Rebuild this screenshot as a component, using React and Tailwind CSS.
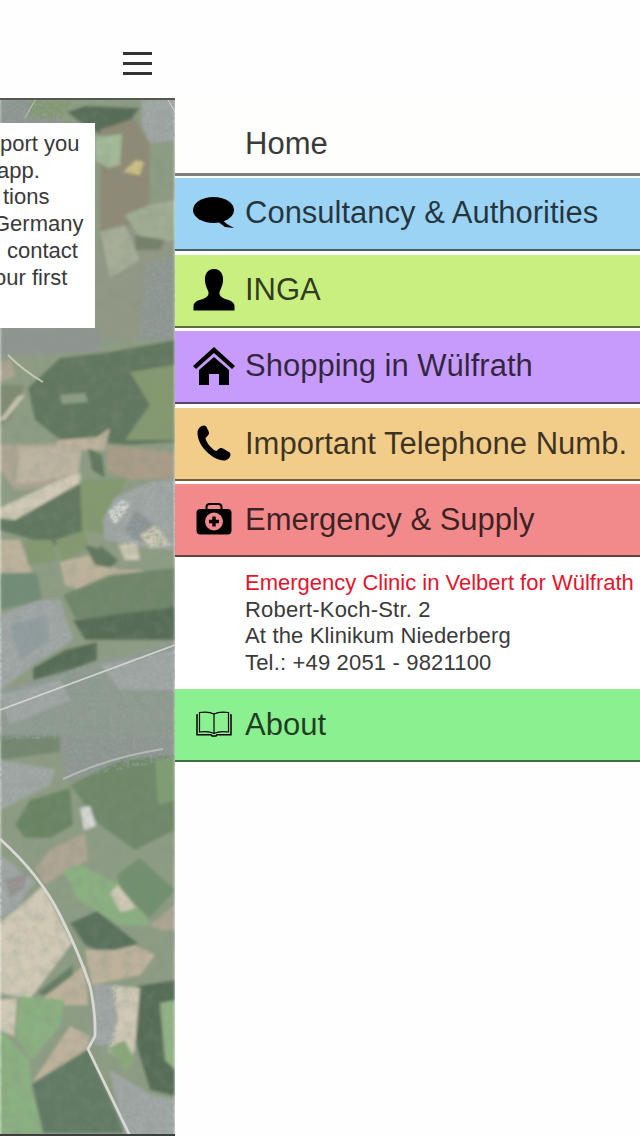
const F = {
  forest: '#62775f',
  deep: '#566c57',
  green: '#84996f',
  mid: '#8e9c84',
  bright: '#8bb081',
  pale: '#a3b997',
  tan: '#aea593',
  sand: '#cfc9b5',
  wheat: '#bdb29b',
  urban: '#a3a8a8',
  urbanDark: '#8f9692',
};

const shapes = [
  [F.mid, '0,98 175,98 175,1136 0,1136'],
  // top
  [F.urbanDark, '0,98 70,98 60,125 0,130'],
  [F.green, '30,100 72,100 62,118 30,118'],
  [F.deep, '67,112 85,106 140,108 125,128 100,134 80,122'],
  [F.urban, '142,100 175,100 175,140 150,143 142,125'],
  ['#8f8a76', '100,130 135,118 150,145 150,200 125,250 100,250'],
  [F.pale, '95,137 122,134 120,165 108,168 95,160'],
  ['#cdbf85', '123,172 136,160 144,162 140,175'],
  ['#919886', '95,250 130,225 175,190 175,340 95,340'],
  ['#a0ad94', '125,215 150,205 175,200 175,240 145,245'],
  ['#a6ae98', '100,232 125,225 140,260 110,278'],
  ['#74816b', '135,235 165,240 160,250 135,250'],
  [F.urbanDark, '145,265 175,255 175,340 140,340'],
  [F.urbanDark, '0,328 100,328 100,352 0,356'],
  // forest band
  [F.forest, '28,388 60,358 110,352 175,340 175,442 130,445 60,440 35,420'],
  [F.green, '130,372 175,365 175,440 125,440 150,405'],
  [F.mid, '60,395 85,393 88,402 62,404'],
  [F.tan, '0,362 10,360 16,376 0,382'],
  ['#7f8a72', '0,385 25,385 10,420 0,425'],
  [F.sand, '0,420 18,396 25,395 5,420'],
  [F.tan, '0,445 85,442 70,485 15,490 0,470'],
  ['#bdb5a1', '20,447 82,448 78,475 15,485'],
  [F.wheat, '57,440 97,437 110,428 105,450 57,450'],
  [F.forest, '88,448 102,455 105,478 92,470'],
  ['#a99d88', '107,445 175,452 175,478 130,480 107,470'],
  [F.forest, '0,510 80,480 88,520 75,545 50,545 0,530'],
  [F.sand, '0,508 55,482 80,473 82,482 15,520 0,518'],
  [F.green, '80,480 128,478 110,510 103,535 82,530'],
  // industrial
  [F.urban, '103,520 115,498 150,482 175,480 175,550 130,545 105,540'],
  ['#d6d8d4', '108,512 122,500 130,504 115,525'],
  ['#8c9296', '125,530 135,510 155,525 165,545 135,540'],
  [F.sand, '140,535 155,525 172,545 150,548'],
  [F.forest, '100,545 118,560 112,568 98,555'],
  // mid fields
  [F.wheat, '0,540 20,540 32,572 0,575'],
  [F.green, '25,540 52,540 58,560 28,565'],
  [F.green, '55,540 85,530 88,548 62,562'],
  [F.wheat, '60,562 90,555 120,570 143,570 143,574 80,590 65,585'],
  [F.sand, '118,545 137,542 140,560 125,560'],
  [F.forest, '85,545 105,550 112,568 95,565'],
  ['#6f866a', '63,595 110,575 175,568 175,617 75,618'],
  [F.deep, '73,620 175,607 175,640 130,640 85,640'],
  ['#728c78', '0,573 37,573 42,600 0,610'],
  // urban and road
  [F.urban, '0,615 40,600 60,600 73,640 33,665 0,690'],
  ['#929ca2', '10,625 45,615 50,640 20,660'],
  [F.deep, '33,668 65,650 97,642 97,660 50,678 33,680'],
  ['#8f9a90', '0,690 175,640 175,736 0,740'],
  [F.urban, '100,665 175,650 175,690 120,690'],
  [F.urban, '0,695 60,680 70,700 10,725'],
  ['#74876f', '0,736 60,736 60,752 0,760'],
  [F.urbanDark, '60,736 175,736 175,760 65,780'],
  [F.urban, '0,760 55,770 50,785 10,805 0,810'],
  // lower fields
  ['#6f8869', '70,785 120,760 175,755 175,830 135,850 100,825'],
  ['#7f9d73', '155,760 175,758 175,800 158,805'],
  ['#6b8463', '15,825 30,800 70,788 73,825 50,838 25,838'],
  ['#d4d7d2', '80,808 90,806 96,826 84,830'],
  [F.tan, '35,870 50,850 85,833 88,860 60,875 45,885'],
  [F.urban, '0,855 35,882 15,910 0,918'],
  ['#9a8f92', '5,880 28,872 24,888 10,898'],
  [F.bright, '62,870 80,865 130,890 150,925 120,925 78,900'],
  ['#71906d', '117,875 140,858 175,890 150,918 122,895'],
  [F.sand, '110,893 118,885 137,908 120,912'],
  [F.tan, '150,925 175,905 175,930 160,930'],
  ['#5a715c', '70,923 97,911 138,943 120,960 85,945'],
  [F.wheat, '85,950 115,950 135,945 155,955 140,975 92,985'],
  [F.sand, '0,923 43,886 72,943 30,999 0,993'],
  [F.wheat, '43,996 85,965 88,1005 55,1005'],
  ['#637e63', '37,993 73,965 73,975 45,996'],
  [F.deep, '137,986 175,980 175,1096 150,1090 135,1040'],
  ['#92b286', '160,1003 175,1000 175,1070 165,1060'],
  [F.urban, '93,985 118,985 115,1045 95,1045'],
  [F.sand, '112,986 140,988 135,1050 125,1068 108,1050 118,1020'],
  ['#8ba77c', '108,1048 125,1040 135,1060 125,1072'],
  [F.bright, '20,996 65,1000 60,1026 32,1060 15,1036'],
  [F.sand, '0,1000 17,998 14,1036 0,1030'],
  [F.wheat, '32,1083 70,1026 90,1036 88,1049'],
  [F.bright, '0,1030 30,1060 32,1090 45,1133 0,1133'],
  ['#627a64', '32,1084 88,1049 125,1133 43,1133'],
  [F.urban, '110,1070 150,1095 175,1100 175,1136 125,1136'],
];

const urbanAreas = [
  '0,98 70,98 60,125 0,130',
  '142,100 175,100 175,140 150,143 142,125',
  '145,265 175,255 175,340 140,340',
  '103,520 115,498 150,482 175,480 175,550 130,545 105,540',
  '0,615 40,600 60,600 73,640 33,665 0,690',
  '0,690 175,640 175,736 0,740',
  '60,736 175,736 175,760 65,780',
  '0,760 55,770 50,785 10,805 0,810',
  '0,855 35,882 15,910 0,918',
  '93,985 118,985 115,1045 95,1045',
  '110,1070 150,1095 175,1100 175,1136 125,1136',
];

// x,y points follow the road curves in the photo
const roads = [
  ['M0 839 Q40 875 60 915 T90 986 Q96 1015 95 1036 L88 1049 L130 1136', '#d8d9d3', 2.8],
  ['M0 710 L175 645', '#d3d5d0', 1.8],
  ['M63 779 Q110 757 163 749', '#b4b9b3', 2],
  ['M8 355 Q25 372 43 382', '#c6c7b0', 2],
  ['M25 118 L35 100', '#c0c4bc', 1],
  ['M168 100 L175 112', '#d3d5d0', 1],
];

const AerialMap = () => (
  <svg viewBox="0 98 175 1038" className="block w-[175px] h-[1038px]" preserveAspectRatio="none">
    <defs>
      <filter id="soft" x="0" y="0" width="100%" height="100%">
        <feGaussianBlur stdDeviation="1.5" />
      </filter>
      <filter id="roadBlur" x="0" y="0" width="100%" height="100%">
        <feGaussianBlur stdDeviation="0.5" />
      </filter>
      <filter id="mottle" x="0" y="0" width="100%" height="100%">
        <feTurbulence type="fractalNoise" baseFrequency="0.09" numOctaves="3" seed="4" />
        <feColorMatrix values="0 0 0 0 0.22  0 0 0 0 0.28  0 0 0 0 0.22  1.8 0 0 0 -0.7" />
      </filter>
      <filter id="streets" x="0" y="0" width="100%" height="100%">
        <feTurbulence type="fractalNoise" baseFrequency="0.3" numOctaves="2" seed="11" />
        <feColorMatrix values="0 0 0 0 0.3  0 0 0 0 0.36  0 0 0 0 0.32  3 0 0 0 -1.25" />
        <feGaussianBlur stdDeviation="0.4" />
      </filter>
      <clipPath id="urban">
        {urbanAreas.map((points) => (
          <polygon key={points} points={points} />
        ))}
      </clipPath>
    </defs>
    <g filter="url(#soft)">
      {shapes.map(([fill, points], i) => (
        <polygon key={i} points={points} fill={fill} />
      ))}
    </g>
    <rect x="0" y="98" width="175" height="1038" filter="url(#mottle)" opacity="0.3" />
    <g clipPath="url(#urban)">
      <rect x="0" y="98" width="175" height="1038" filter="url(#streets)" opacity="0.6" />
    </g>
    <g filter="url(#roadBlur)">
      {roads.map(([d, stroke, width], i) => (
        <path key={i} d={d} fill="none" stroke={stroke} strokeWidth={width} strokeLinejoin="round" />
      ))}
    </g>
  </svg>
);

const ChatIcon = () => (
  <svg viewBox="0 0 42 32" className="w-[42px] h-[32px]">
    <ellipse cx="20.5" cy="13" rx="20.5" ry="13" fill="#000" />
    <path d="M28 22 L34 27 L41 31 L32 30 L24 24 Z" fill="#000" />
  </svg>
);

const PersonIcon = () => (
  <svg viewBox="0 0 42 42" className="w-[42px] h-[42px]">
    <path
      d="M21 0 C28 0 30.5 6 30 12 C29.6 17 27.5 20 26.5 23 C26 26 27.5 28 31 29.5 C36 31.3 41 32 41.5 37 L41.5 41.5 L0.5 41.5 L0.5 37 C1 32 6 31.3 11 29.5 C14.5 28 16 26 15.5 23 C14.5 20 12.4 17 12 12 C11.5 6 14 0 21 0 Z"
      fill="#000"
    />
  </svg>
);

const HomeIcon = () => (
  <svg viewBox="0 0 42 38" className="w-[42px] h-[38px]">
    <path d="M0 19 L21 0 L42 19 L39 22 L21 6 L3 22 Z" fill="#000" />
    <path d="M21 10 L36 23 L36 38 L26 38 L26 27 L16 27 L16 38 L6 38 L6 23 Z" fill="#000" />
  </svg>
);

const PhoneIcon = () => (
  <svg viewBox="0 0 34 36" className="w-[34px] h-[36px]">
    <path
      d="M7 0.500 C3 1 0.500 4 0.500 8 C0.500 14 4 21 9 26 C15 32 21 35.500 27 35.500 C30 35.500 33 33 33.500 30 C33.500 28.500 33 27.500 31.500 26.800 L26 23.500 C24 22.500 22.500 23 21 24.500 L19.500 26 C17 25.500 13.500 22 11.500 19.500 C10 17.500 8.500 14.500 8.500 13 L10.500 11 C12 9.500 12.500 8 11.500 6 L9.500 2 C9 1 8 0.500 7 0.500 Z"
      fill="#000"
    />
  </svg>
);

const MedkitIcon = () => (
  <svg viewBox="0 0 36 32" className="w-[36px] h-[32px]">
    <path
      d="M10.500 8 L10.500 4 C10.500 1.800 12 1 14 1 L22 1 C24 1 25.500 1.800 25.500 4 L25.500 8"
      fill="none"
      stroke="#000"
      strokeWidth="2"
    />
    <rect x="0.500" y="6" width="35" height="25.500" rx="4" fill="#000" />
    <circle cx="18" cy="18.500" r="9" fill="#f28a8c" />
    <path d="M16.300 13.500 H19.700 V16.800 H23 V20.200 H19.700 V23.500 H16.300 V20.200 H13 V16.800 H16.300 Z" fill="#000" />
  </svg>
);

const BookIcon = () => (
  <svg viewBox="0 0 36 26" className="w-[36px] h-[26px]">
    <path
      d="M18 3 C14 0.800 8 0.800 3.500 1.500 L3.500 21 C8 20.300 14 20.300 18 22.500 C22 20.300 28 20.300 32.500 21 L32.500 1.500 C28 0.800 22 0.800 18 3 Z M18 3 L18 22.500"
      fill="none"
      stroke="#000"
      strokeWidth="1.200"
    />
    <path d="M2 4 L1 4 L1 23.800 L15 23.800 L16 25 L20 25 L21 23.800 L35 23.800 L35 4 L34 4" fill="none" stroke="#000" strokeWidth="1.500" />
  </svg>
);

const MenuRow = ({ bg, icon, label, mb = 'mb-[3.5px]', textClass = 'pb-[1px]' }) => (
  <div className={`flex items-center h-[73px] border-b-2 border-black/55 ${bg} ${mb}`}>
    <div className="flex justify-center items-center w-[70px] h-full pl-[7px] pb-px text-black">{icon}</div>
    <span className={`text-[31px] text-black/75 whitespace-nowrap leading-none ${textClass}`}>{label}</span>
  </div>
);

const cardLines = [
  ['port you', 'ml-[0px]'],
  ['app.', 'ml-[-3px]'],
  ['tions', 'ml-[3px]'],
  ['Germany', 'ml-[-7px]'],
  ['contact', 'ml-[7px]'],
  ['our first', 'ml-[-6px]'],
];

const App = () => (
  <div className="flex w-[640px] h-[1136px] overflow-hidden bg-white font-['Liberation_Sans',Arial,sans-serif]">
    <div className="flex flex-col w-[175px] h-full">
      <div className="flex flex-col items-end gap-[7px] h-[98px] pt-[52px] pr-[23px] bg-[#fefefe]">
        <div className="w-[29px] h-[3px] bg-[#333]" />
        <div className="w-[29px] h-[3px] bg-[#333]" />
        <div className="w-[29px] h-[3px] bg-[#333]" />
      </div>
      <div className="relative flex-1 overflow-hidden">
        <AerialMap />
        <div className="absolute inset-x-0 top-0 h-[2px] bg-[#55584f]" />
        <div className="absolute inset-x-0 bottom-0 h-[2px] bg-[#3c403c]" />
        <div className="absolute left-0 top-[25px] w-[95px] h-[205px] pt-[8px] bg-white overflow-hidden text-[22px] leading-[26.7px] text-[#3a3a3a] whitespace-nowrap">
          {cardLines.map(([text, offset]) => (
            <p key={text} className={offset}>{text}</p>
          ))}
        </div>
      </div>
    </div>
    <div className="flex-1 flex flex-col pt-[98px] bg-[#fefefe]">
      <div className="flex items-center h-[78px] pt-[17px] pl-[70px] mb-[2px] border-b-[3px] border-[#7d7d7b] bg-[#fefefc] text-[31px] text-[#3a3a3a]">
        Home
      </div>
      <MenuRow bg="bg-[#9bd3f5]" icon={<ChatIcon />} label="Consultancy & Authorities" textClass="pb-[3px]" />
      <MenuRow bg="bg-[#c9ef80]" icon={<PersonIcon />} label="INGA" />
      <MenuRow bg="bg-[#c79bfb]" icon={<HomeIcon />} label="Shopping in Wülfrath" textClass="pb-[3px]" />
      <MenuRow bg="bg-[#f2cd8a]" icon={<PhoneIcon />} label="Important Telephone Numb." textClass="pb-0" />
      <MenuRow bg="bg-[#f28a8c]" icon={<MedkitIcon />} label="Emergency & Supply" mb="mb-0" textClass="pb-[1px]" />
      <div className="h-[132px] pt-[13px] pl-[70px] bg-white text-[22px] leading-[26.7px] text-[#3a3a3a] whitespace-nowrap">
        <p className="text-[#e3142d]">Emergency Clinic in Velbert for Wülfrath</p>
        <p className="tracking-[0.2px]">Robert-Koch-Str. 2</p>
        <p className="tracking-[0.16px]">At the Klinikum Niederberg</p>
        <p className="tracking-[0.17px]">Tel.: +49 2051 - 9821100</p>
      </div>
      <MenuRow bg="bg-[#8bf190]" icon={<BookIcon />} label="About" mb="mb-0" textClass="pb-0" />
    </div>
  </div>
);

export default App;
